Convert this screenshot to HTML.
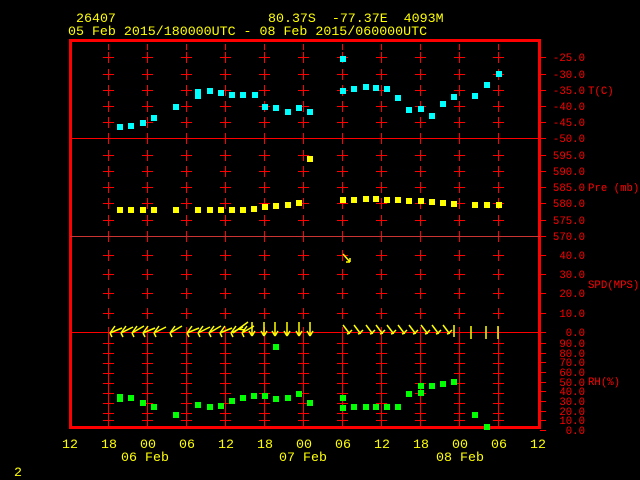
<!DOCTYPE html>
<html><head><meta charset="utf-8"><style>
html,body{margin:0;padding:0;background:#000;width:640px;height:480px;overflow:hidden}
svg{display:block}
text{font-family:"Liberation Mono",monospace;font-size:13.3px}
.r{fill:#f00;font-size:10.7px}
.y{fill:#ff0}
</style></head><body>
<svg id="s" width="640" height="480" xmlns="http://www.w3.org/2000/svg">
<text x="76" y="22" class="y">26407</text>
<text x="268" y="22" class="y" xml:space="preserve">80.37S  -77.37E  4093M</text>
<text x="68" y="35" class="y">05 Feb 2015/180000UTC - 08 Feb 2015/060000UTC</text>
<g id="grid" stroke="#f00" stroke-width="1" shape-rendering="crispEdges"></g>
<rect x="70.5" y="40.5" width="469" height="387" fill="none" stroke="#f00" stroke-width="3" shape-rendering="crispEdges"/>
<g stroke="#f00" stroke-width="1" shape-rendering="crispEdges">
<line x1="70" y1="138.5" x2="540" y2="138.5"/>
<line x1="70" y1="236.5" x2="540" y2="236.5" stroke="#c33"/>
<line x1="70" y1="332.5" x2="540" y2="332.5"/>
</g>
<g id="lab"></g>
<g id="pts"></g>
<g id="wind" stroke="#ff0" stroke-width="1.5" fill="none"></g>
<text x="14" y="476" class="y">2</text>
</svg>
<script>
var NS="http://www.w3.org/2000/svg",s=document.getElementById('s');
function el(p,t,a,txt){var e=document.createElementNS(NS,t);for(var k in a)e.setAttribute(k,a[k]);if(txt!=null)e.textContent=txt;document.getElementById(p).appendChild(e);return e;}
var xs=[108,147,186,225,264,303,342,381,420,459,498];
var ticks=[57,74,90,106,122,155,171,187,203,220,255,274,293,313,343,353,363,373,383,393,403,413,420];
xs.forEach(function(x){ticks.forEach(function(y){
 el('grid','line',{x1:x+.5,y1:y-5,x2:x+.5,y2:y+6});
 el('grid','line',{x1:x-5,y1:y+.5,x2:x+6,y2:y+.5});});
 [138,236,332].forEach(function(y){el('grid','line',{x1:x+.5,y1:y-5,x2:x+.5,y2:y+6});});
 el('grid','line',{x1:x+.5,y1:44,x2:x+.5,y2:50});
});
var rl=[[57,"-25.0"],[74,"-30.0"],[90,"-35.0"],[106,"-40.0"],[122,"-45.0"],[138,"-50.0"],[155,"595.0"],[171,"590.0"],[187,"585.0"],[203,"580.0"],[220,"575.0"],[236,"570.0"],[255,"40.0"],[274,"30.0"],[293,"20.0"],[313,"10.0"],[332,"0.0"],[343,"90.0"],[353,"80.0"],[362,"70.0"],[372,"60.0"],[382,"50.0"],[391,"40.0"],[401,"30.0"],[411,"20.0"],[420,"10.0"],[430,"0.0"]];
rl.forEach(function(r){el('lab','line',{x1:540,y1:r[0]+.5,x2:546,y2:r[0]+.5,stroke:'#f00','shape-rendering':'crispEdges'});
 el('lab','text',{x:585,y:r[0]+4,'class':'r','text-anchor':'end'},r[1]);});
[[90,"T(C)"],[187,"Pre (mb)"],[284,"SPD(MPS)"],[381,"RH(%)"]].forEach(function(r){el('lab','text',{x:588,y:r[0]+4,'class':'r'},r[1]);});
var bl=["12","18","00","06","12","18","00","06","12","18","00","06","12"];
bl.forEach(function(t,i){el('lab','text',{x:70+i*39,y:448,'class':'y','text-anchor':'middle'},t);});
[[145,"06 Feb"],[303,"07 Feb"],[460,"08 Feb"]].forEach(function(r){el('lab','text',{x:r[0],y:461,'class':'y','text-anchor':'middle'},r[1]);});
function pts(c,a){a.forEach(function(p){el('pts','rect',{x:p[0]-3,y:p[1]-3,width:6,height:6,fill:c});});}
pts('#0ff',[[120,127],[131,126],[143,123],[154,118],[176,107],[198,92],[198,96],[210,91],[221,93],[232,95],[243,95],[255,95],[265,107],[276,108],[288,112],[299,108],[310,112],[343,59],[343,91],[354,89],[366,87],[376,88],[387,89],[398,98],[409,110],[421,109],[432,116],[443,104],[454,97],[475,96],[487,85],[499,74]]);
pts('#ff0',[[120,210],[131,210],[143,210],[154,210],[176,210],[198,210],[210,210],[221,210],[232,210],[243,210],[254,209],[265,207],[276,206],[288,205],[299,203],[310,159],[343,200],[354,200],[366,199],[376,199],[387,200],[398,200],[409,201],[421,201],[432,202],[443,203],[454,204],[475,205],[487,205],[499,205]]);
pts('#0f0',[[120,397],[120,399],[131,398],[143,403],[154,407],[176,415],[198,405],[210,407],[221,406],[232,401],[243,398],[254,396],[265,396],[276,399],[276,347],[288,398],[299,394],[310,403],[343,398],[343,408],[354,407],[366,407],[376,407],[387,407],[398,407],[409,394],[421,393],[421,386],[432,386],[443,384],[454,382],[475,415],[487,427]]);
var w=document.getElementById('wind');
function ln(a,b,c,d){var e=document.createElementNS(NS,'line');e.setAttribute('x1',a);e.setAttribute('y1',b);e.setAttribute('x2',c);e.setAttribute('y2',d);w.appendChild(e);}
[110,121,132,143,154,170,187,198,209,220,231,242].forEach(function(x,i){ln(x,333,x+12,328-(i%3));ln(x,333,x+5,326);ln(x,333,x+2,337);});
ln(233,333,248,322);ln(238,329,245,330);
[252,264,275,287,299,310].forEach(function(x){ln(x,322,x,336);ln(x-3,331,x,336);ln(x+3,331,x,336);});
[343,354,366,376,387,398,409,421,432,443].forEach(function(x){ln(x,325,x+6,333);ln(x+6,333,x+9,330);ln(x+4,334,x+7,333);});
ln(454,325,454,337);ln(471,326,471,339);ln(486,326,486,339);ln(498,326,498,339);
ln(343,254,350,262);ln(350,262,346,262);ln(350,262,350,258);
</script>
</body></html>
